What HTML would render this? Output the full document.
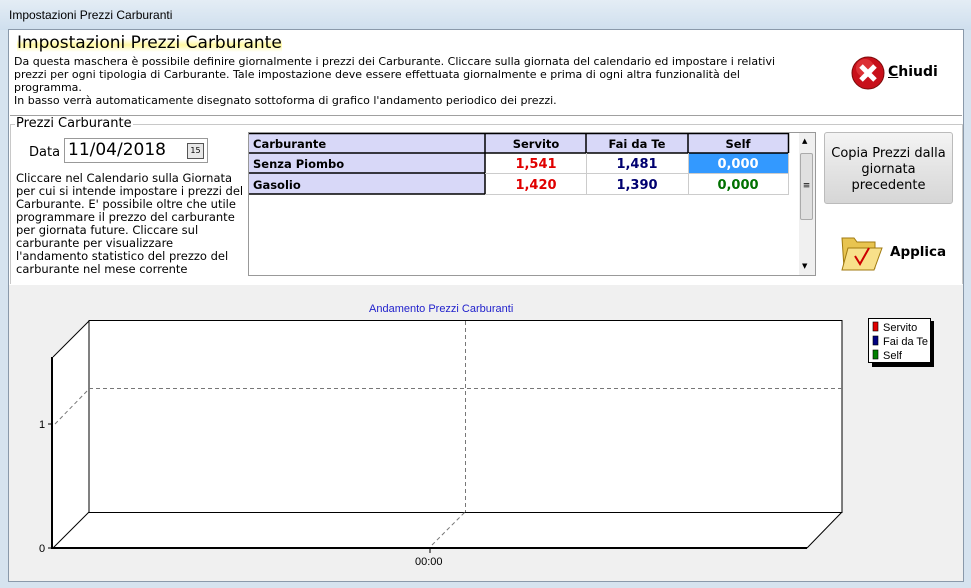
<!DOCTYPE html>
<html><head><meta charset="utf-8"><style>
*{margin:0;padding:0;box-sizing:border-box}
body{width:971px;height:588px;overflow:hidden;background:#d6e3ef;font-family:"DejaVu Sans","Liberation Sans",sans-serif;position:relative}
.a{position:absolute}
.t{font-size:11px;color:#000;line-height:13px}
</style></head><body>
<div class="a" style="left:0;top:0;width:971px;height:30px;background:linear-gradient(#e4edf5,#cfdfee)"></div>
<div class="a" style="left:9px;top:8px;font-family:'Liberation Sans',sans-serif;font-size:12px">Impostazioni Prezzi Carburanti</div>
<div class="a" style="left:8px;top:29px;width:956px;height:553px;background:#f0f0f0;border:1px solid #8a99aa"></div>
<div class="a" style="left:9px;top:30px;width:954px;height:255px;background:#fff"></div>
<div class="a" style="left:10px;top:115px;width:952px;height:1px;background:#a0a0a0"></div>
<div class="a" style="left:17px;top:33px;font-size:17px;color:#000;background:linear-gradient(transparent 30%,#fff8a0 60%,transparent 95%)">Impostazioni Prezzi Carburante</div>
<div class="a t" style="left:14px;top:55px;width:785px">Da questa maschera è possibile definire giornalmente i prezzi dei Carburante. Cliccare sulla giornata del calendario ed impostare i relativi prezzi per ogni tipologia di Carburante. Tale impostazione deve essere effettuata giornalmente e prima di ogni altra funzionalità del programma.<br>In basso verrà automaticamente disegnato sottoforma di grafico l'andamento periodico dei prezzi.</div>
<svg class="a" style="left:851px;top:56px" width="34" height="34"><circle cx="17" cy="17" r="16" fill="#c8101a" stroke="#7a0a0a"/><circle cx="14" cy="12" r="9" fill="#f05050" opacity=".5"/><path d="M10 10L24 24M24 10L10 24" stroke="#fff" stroke-width="5"/></svg>
<div class="a" style="left:888px;top:64px;font-size:14px;font-weight:bold"><u>C</u>hiudi</div>
<div class="a" style="left:10px;top:124px;width:953px;height:160px;border:1px solid #c8c8c8;border-bottom:none"></div>
<div class="a" style="left:15px;top:116px;font-size:13px;background:#fff;padding:0 1px">Prezzi Carburante</div>
<div class="a" style="left:29px;top:145px;font-size:13px">Data</div>
<div class="a" style="left:64px;top:138px;width:144px;height:25px;border:1px solid #999;background:#fff;font-size:17px;padding:1px 3px">11/04/2018</div>
<div class="a" style="left:187px;top:143px;width:17px;height:16px;border:1px solid #555;background:#e8e8e8;font-size:8px;text-align:center;line-height:14px">15</div>
<div class="a t" style="left:16px;top:172px;width:232px;font-size:11.5px">Cliccare nel Calendario sulla Giornata per cui si intende impostare i prezzi del Carburante. E' possibile oltre che utile programmare il prezzo del carburante per giornata future. Cliccare sul carburante per visualizzare l'andamento statistico del prezzo del carburante nel mese corrente</div>
<div class="a" style="left:248px;top:132px;width:568px;height:144px;border:1px solid #999;background:#fff"></div>
<div class="a" style="left:799px;top:133px;width:16px;height:142px;background:#f0f0f0"></div>
<div class="a" style="left:800px;top:153px;width:13px;height:67px;background:#e0e0e0;border:1px solid #aaa;border-radius:2px;font-size:9px;text-align:center;line-height:65px">≡</div>
<div class="a" style="left:802px;top:137px;font-size:7px">▲</div><div class="a" style="left:802px;top:262px;font-size:7px">▼</div>
<svg class="a" style="left:249px;top:133px" width="541" height="62" font-family="DejaVu Sans" font-size="11.5" font-weight="bold">
<rect x="0" y="0" width="540" height="20" fill="#d8d8f8"/><rect x="0" y="20" width="236" height="41" fill="#d8d8f8"/>
<rect x="439" y="20" width="101" height="20" fill="#3399ff"/>
<g stroke="#000" stroke-width="1.5"><line x1="0" y1="0.5" x2="540" y2="0.5"/><line x1="0" y1="20" x2="540" y2="20"/><line x1="0" y1="40" x2="236" y2="40"/><line x1="0" y1="61" x2="236" y2="61"/><line x1="236" y1="0" x2="236" y2="61"/><line x1="337" y1="0" x2="337" y2="20"/><line x1="439" y1="0" x2="439" y2="20"/><line x1="539.5" y1="0" x2="539.5" y2="20"/></g>
<g stroke="#ccc"><line x1="236" y1="40.5" x2="540" y2="40.5"/><line x1="236" y1="61.5" x2="540" y2="61.5"/><line x1="337.5" y1="20" x2="337.5" y2="61"/><line x1="439.5" y1="20" x2="439.5" y2="61"/><line x1="539.5" y1="20" x2="539.5" y2="61"/></g>
<text x="4" y="15">Carburante</text><text x="287" y="15" text-anchor="middle">Servito</text><text x="388" y="15" text-anchor="middle">Fai da Te</text><text x="489" y="15" text-anchor="middle">Self</text>
<text x="4" y="35">Senza Piombo</text><text x="4" y="56">Gasolio</text>
<g font-size="13"><text x="287" y="35" fill="#e00000" text-anchor="middle">1,541</text><text x="388" y="35" fill="#000070" text-anchor="middle">1,481</text><text x="489" y="35" fill="#fff" text-anchor="middle">0,000</text>
<text x="287" y="56" fill="#e00000" text-anchor="middle">1,420</text><text x="388" y="56" fill="#000070" text-anchor="middle">1,390</text><text x="489" y="56" fill="#007000" text-anchor="middle">0,000</text></g>
</svg>
<div class="a" style="left:824px;top:132px;width:129px;height:72px;border:1px solid #bbb;border-radius:3px;background:linear-gradient(#f4f4f4,#e4e4e4 50%,#d6d6d6);font-size:13px;text-align:center;line-height:16px;padding-top:13px">Copia Prezzi dalla giornata precedente</div>
<svg class="a" style="left:840px;top:232px" width="44" height="40"><path d="M2 6h12l3 4h18v26H4z" fill="#e8c450" stroke="#a07a10"/><path d="M8 16h34l-8 22H2z" fill="#f8e08a" stroke="#a07a10"/><path d="M15 24l5 8 9-16" fill="none" stroke="#c00" stroke-width="2"/></svg>
<div class="a" style="left:890px;top:244px;font-size:13.5px;font-weight:bold">Applica</div>
<div class="a" style="left:369px;top:303px;font-family:'Liberation Sans',sans-serif;font-size:11px;color:#2222cc">Andamento Prezzi Carburanti</div>
<svg class="a" style="left:0;top:290px" width="971" height="290" font-family="Liberation Sans" font-size="11">
<polygon points="89,30 842,30 842,222 807,258 53,258 53,67" fill="#fff"/>
<rect x="89" y="30.5" width="753" height="192" fill="none" stroke="#000"/>
<line x1="89" y1="222.5" x2="842" y2="222.5" stroke="#000" stroke-dasharray="3,2"/>
<line x1="89" y1="98.5" x2="842" y2="98.5" stroke="#777" stroke-dasharray="4,3"/>
<line x1="465.5" y1="31" x2="465.5" y2="222" stroke="#777" stroke-dasharray="4,3"/>
<line x1="53" y1="67" x2="89" y2="31" stroke="#000"/>
<line x1="53" y1="258" x2="89" y2="222" stroke="#000"/>
<line x1="807" y1="258" x2="842" y2="222" stroke="#000"/>
<line x1="55" y1="134" x2="89" y2="99" stroke="#777" stroke-dasharray="4,3"/>
<line x1="432" y1="255" x2="465" y2="222" stroke="#777" stroke-dasharray="4,3"/>
<line x1="52" y1="67" x2="52" y2="259" stroke="#000" stroke-width="2"/>
<line x1="52" y1="258" x2="807" y2="258" stroke="#000" stroke-width="2"/>
<line x1="48" y1="134" x2="52" y2="134" stroke="#000"/><line x1="48" y1="258" x2="52" y2="258" stroke="#000"/>
<line x1="430" y1="258" x2="430" y2="263" stroke="#000"/>
<text x="39" y="138">1</text><text x="39" y="262">0</text><text x="415" y="275">00:00</text>
<rect x="872" y="31" width="62" height="46" fill="#000"/>
<rect x="868.5" y="28.5" width="62" height="44" fill="#fff" stroke="#000"/>
<rect x="873" y="32" width="5" height="9" fill="#e00000" stroke="#000" stroke-width=".6"/><rect x="873" y="46" width="5" height="9" fill="#000080" stroke="#000" stroke-width=".6"/><rect x="873" y="60" width="5" height="9" fill="#008000" stroke="#000" stroke-width=".6"/>
<text x="883" y="41">Servito</text><text x="883" y="55">Fai da Te</text><text x="883" y="69">Self</text>
</svg>
</body></html>
